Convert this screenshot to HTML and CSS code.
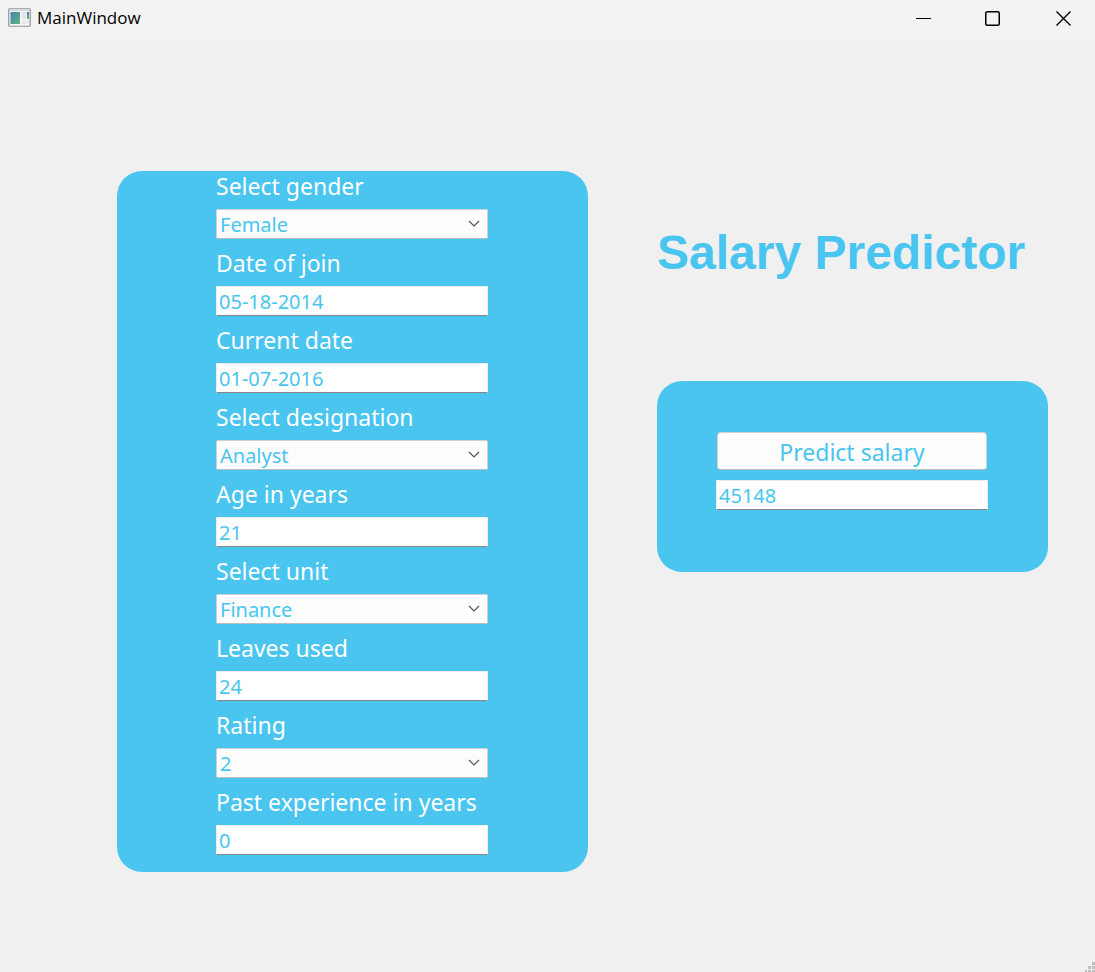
FILE: index.html
```html
<!DOCTYPE html>
<html lang="en">
<head>
<meta charset="utf-8">
<meta name="viewport" content="width=device-width, initial-scale=1">
<title>MainWindow</title>
<link rel="stylesheet" href="styles.css">
</head>
<body>
<div class="window">
  <header class="titlebar">
    <svg class="app-icon" width="24" height="20" viewBox="0 0 24 20" aria-hidden="true">
      <defs>
        <linearGradient id="pane" x1="0" y1="0" x2="1" y2="1"><stop offset="0" stop-color="#4b7fb5"/><stop offset="1" stop-color="#5cb87c"/></linearGradient>
        <linearGradient id="strip" x1="0" y1="0" x2="0" y2="1"><stop offset="0" stop-color="#4677b4"/><stop offset="1" stop-color="#62b586"/></linearGradient>
      </defs>
      <rect x="0.75" y="0.75" width="21.5" height="17.5" rx="1" fill="#f4f5f6" stroke="#8e949b" stroke-width="1.2"/>
      <path d="M2 2.5h19" stroke="#d3d7dc"/>
      <rect x="2.5" y="4" width="9.5" height="12" fill="url(#pane)"/>
      <rect x="14" y="4" width="4" height="7" fill="#e0e2e4"/>
      <rect x="14" y="12" width="4" height="4" fill="#e6e7e8"/>
      <rect x="19" y="4" width="2" height="7" fill="url(#strip)"/>
      <rect x="19" y="12" width="2" height="4" fill="#e6e7e8"/>
    </svg>
    <span class="window-name">MainWindow</span>
    <div class="window-controls">
      <button type="button" class="control" aria-label="Minimize"><svg width="17" height="17" viewBox="0 0 17 17"><path d="M1 8.5h15" stroke="#000"/></svg></button>
      <button type="button" class="control" aria-label="Maximize"><svg width="17" height="17" viewBox="0 0 17 17"><rect x="0.75" y="1.75" width="13.5" height="13.5" rx="1.5" fill="none" stroke="#000" stroke-width="1.5"/></svg></button>
      <button type="button" class="control" aria-label="Close"><svg width="17" height="17" viewBox="0 0 17 17"><path d="M1.5 1.5l14 14M15.5 1.5l-14 14" stroke="#000" stroke-width="1.4"/></svg></button>
    </div>
  </header>

  <form class="content">
    <section class="panel details">
      <div class="field">
        <label for="gender">Select gender</label>
        <select id="gender"><option>Female</option><option>Male</option></select>
      </div>
      <div class="field">
        <label for="join">Date of join</label>
        <input type="text" id="join" value="05-18-2014">
      </div>
      <div class="field">
        <label for="current">Current date</label>
        <input type="text" id="current" value="01-07-2016">
      </div>
      <div class="field">
        <label for="designation">Select designation</label>
        <select id="designation"><option>Analyst</option></select>
      </div>
      <div class="field">
        <label for="age">Age in years</label>
        <input type="text" id="age" value="21">
      </div>
      <div class="field">
        <label for="unit">Select unit</label>
        <select id="unit"><option>Finance</option></select>
      </div>
      <div class="field">
        <label for="leaves">Leaves used</label>
        <input type="text" id="leaves" value="24">
      </div>
      <div class="field">
        <label for="rating">Rating</label>
        <select id="rating"><option>2</option></select>
      </div>
      <div class="field">
        <label for="experience">Past experience in years</label>
        <input type="text" id="experience" value="0">
      </div>
    </section>

    <div class="side">
      <h1>Salary Predictor</h1>
      <section class="panel result">
        <button type="button" class="predict">Predict salary</button>
        <input type="text" id="salary" aria-label="Predicted salary" value="45148">
      </section>
    </div>
  </form>

  <svg class="grip" width="11" height="11" viewBox="0 0 11 11" aria-hidden="true">
    <path d="M8 1h3v3h-3zM4 5h3v3h-3zM8 5h3v3h-3zM1 9h2v2h-2zM4 9h3v2h-3zM8 9h3v2h-3z" fill="#bfbfbf"/>
  </svg>
</div>
</body>
</html>
```
FILE: styles.css
```css
:root {
  --blue: #49c5f0;
}

* {
  box-sizing: border-box;
}

body {
  margin: 0;
  background: #f0f0f0;
  font-family: "Noto Sans", sans-serif;
}

.window {
  position: relative;
  min-height: 100vh;
}

.titlebar {
  display: flex;
  align-items: center;
  height: 41px;
  padding: 0 0 5px 8px;
  background: #f3f3f3;
}

.window-name {
  margin-left: 5px;
  font: 17px/24px "Open Sans", sans-serif;
  color: #000;
}

.window-controls {
  display: flex;
  margin-left: auto;
}

.control {
  display: flex;
  align-items: center;
  justify-content: center;
  width: 70px;
  height: 36px;
  padding: 0 0 0 6px;
  border: 0;
  background: none;
}

.content {
  display: grid;
  grid-template-columns: 471fr 391fr;
  align-items: start;
  gap: 69px;
  padding: 130px 47px 100px 117px;
}

.panel {
  display: flex;
  flex-direction: column;
  align-items: center;
  padding-right: 1px;
  border-radius: 25px;
  background: var(--blue);
}

.details {
  gap: 9px;
  padding-bottom: 17px;
}

.field {
  display: flex;
  flex-direction: column;
  gap: 8px;
  width: 272px;
}

label {
  font-size: 23px;
  line-height: 30px;
  color: #fff;
  white-space: nowrap;
}

input,
select {
  width: 272px;
  height: 30px;
  margin: 0;
  font-family: inherit;
  font-size: 20px;
  line-height: 28px;
  color: var(--blue);
}

input {
  padding: 0 2px;
  border: 1px solid #ececec;
  border-bottom-color: #868686;
  background: #fff;
}

select {
  appearance: none;
  padding: 1px 24px 0 3px;
  border: 1px solid #d0d0d0;
  border-bottom-color: #bcbcbc;
  border-radius: 2px;
  background: #fdfdfd url("data:image/svg+xml,%3Csvg xmlns='http://www.w3.org/2000/svg' width='12' height='8'%3E%3Cpath d='M1 1l5 5 5-5' fill='none' stroke='%23555' stroke-width='1.2'/%3E%3C/svg%3E") no-repeat right 7px center;
}

.side {
  display: flex;
  flex-direction: column;
  gap: 100px;
  padding-top: 54px;
}

h1 {
  margin: 0;
  font: bold 48px/56px "Liberation Sans", Arial, sans-serif;
  color: var(--blue);
  white-space: nowrap;
}

.result {
  gap: 10px;
  padding-top: 51px;
  padding-bottom: 62px;
}

.predict {
  width: 270px;
  height: 38px;
  padding: 2px 0 0;
  border: 1px solid #d0d0d0;
  border-bottom-color: #bcbcbc;
  border-radius: 4px;
  background: #fdfdfd;
  font-family: inherit;
  font-size: 23px;
  line-height: 34px;
  color: var(--blue);
}

.grip {
  position: absolute;
  right: 0;
  bottom: 0;
}
```
